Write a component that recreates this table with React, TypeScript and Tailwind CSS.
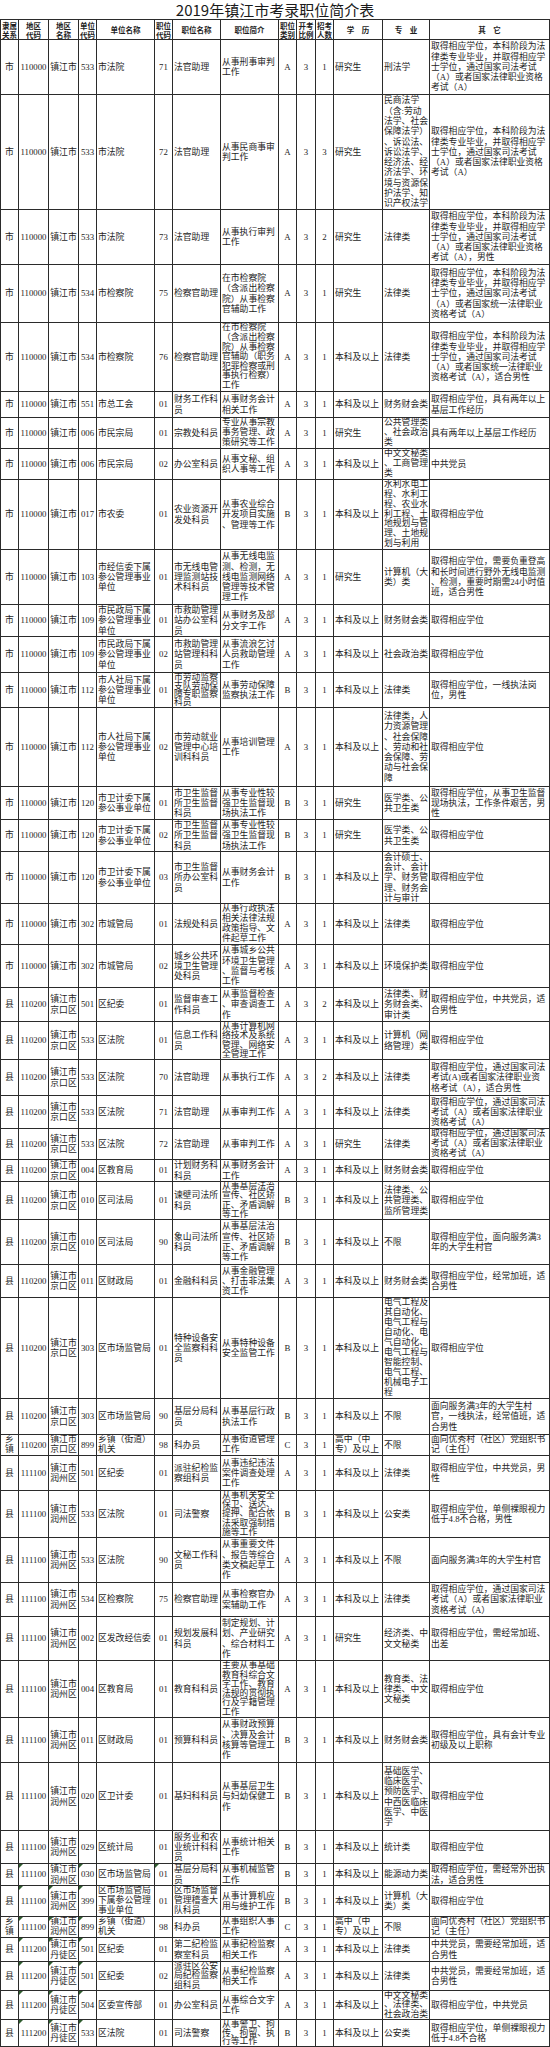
const GRID =
  "grid grid-cols-[18px_30px_30px_18px_58px_18px_48px_58px_18px_19px_18px_49px_47px_120px] border-l border-[#2b2b2b]";

const CELL =
  "relative flex items-center overflow-hidden whitespace-pre border-r border-b border-[#2b2b2b] px-px";

const COLW = [18, 30, 30, 18, 58, 18, 48, 58, 18, 19, 18, 49, 47, 120];
const FONT = 8.8;
const LEAD = 10.3;

const ALIGN = [
  "justify-center text-center",
  "justify-center text-center",
  "justify-center text-center",
  "justify-center text-center",
  "justify-start text-left",
  "justify-center text-center",
  "justify-start text-left",
  "justify-start text-left",
  "justify-center text-center",
  "justify-center text-center",
  "justify-center text-center",
  "justify-start text-left",
  "justify-start text-left",
  "justify-start text-left",
];

const HEAD = [
  "隶属\n关系",
  "地区\n代码",
  "地区\n名称",
  "单位\n代码",
  "单位名称",
  "职位\n代码",
  "职位名称",
  "职位简介",
  "职位\n类别",
  "开考\n比例",
  "招考\n人数",
  "学　历",
  "专　业",
  "其　它",
];

const S = "市";
const X = "110000";
const Z = "镇江市";
const JK = "镇江市\n京口区";
const RZ = "镇江市\n润州区";
const DT = "镇江市\n丹徒区";
const XW = "取得相应学位";
const FA = "取得相应学位，本科阶段为法\n律类专业毕业，并取得相应学\n士学位，通过国家司法考试\n";
const KS = "取得相应学位，通过国家司法\n考试（A）或者国家法律职业\n资格考试（A）";

// row heights in px, read off the screenshot
const HEIGHTS = [
  55, 115, 55, 58, 69, 26, 31, 31, 70, 55, 32, 36, 35, 79, 33, 32, 52, 41, 43, 34, 38, 36, 33, 31, 22, 38, 45,
  33, 101, 36, 21, 35, 47, 45, 34, 44, 57, 45, 68, 33, 22, 31, 21, 24, 29, 29, 27,
];

const ROWS: string[][] = [
  [S, X, Z, "533", "市法院", "71", "法官助理", "从事刑事审判\n工作", "A", "3", "1", "研究生", "刑法学", FA + "（A）或者国家法律职业资格\n考试（A）"],
  [S, X, Z, "533", "市法院", "72", "法官助理", "从事民商事审\n判工作", "A", "3", "3", "研究生", "民商法学\n（含:劳动\n法学、社会\n保障法学）\n、诉讼法、\n诉讼法学、\n经济法、经\n济法学、环\n境与资源保\n护法学、知\n识产权法学", FA + "（A）或者国家法律职业资格\n考试（A）"],
  [S, X, Z, "533", "市法院", "73", "法官助理", "从事执行审判\n工作", "A", "3", "2", "研究生", "法律类", FA + "（A）或者国家法律职业资格\n考试（A），男性"],
  [S, X, Z, "534", "市检察院", "75", "检察官助理", "在市检察院\n（含派出检察\n院）从事检察\n官辅助工作", "A", "3", "1", "研究生", "法律类", FA + "（A）或者国家统一法律职业\n资格考试（A）"],
  [S, X, Z, "534", "市检察院", "76", "检察官助理", "在市检察院\n（含派出检察\n院）从事检察\n官辅助（职务\n犯罪检察或刑\n事执行检察）\n工作", "A", "3", "1", "本科及以上", "法律类", FA + "（A）或者国家统一法律职业\n资格考试（A），适合男性"],
  [S, X, Z, "551", "市总工会", "01", "财务工作科\n员", "从事财务会计\n相关工作", "A", "3", "1", "本科及以上", "财务财会类", "取得相应学位，具有两年以上\n基层工作经历"],
  [S, X, Z, "006", "市民宗局", "01", "宗教处科员", "专业从事宗教\n事务管理、政\n策研究等工作", "A", "3", "1", "研究生", "公共管理类\n、社会政治\n类", "具有两年以上基层工作经历"],
  [S, X, Z, "006", "市民宗局", "02", "办公室科员", "从事文秘、组\n织人事等工作", "A", "3", "1", "本科及以上", "中文文秘类\n、工商管理\n类", "中共党员"],
  [S, X, Z, "017", "市农委", "01", "农业资源开\n发处科员", "从事农业综合\n开发项目实施\n、管理等工作", "B", "3", "1", "本科及以上", "水利水电工\n程、水利工\n程、农业水\n利工程、土\n地规划与管\n理、土地规\n划与利用", XW],
  [S, X, Z, "103", "市经信委下属\n参公管理事业\n单位", "01", "市无线电管\n理监测站技\n术科科员", "从事无线电监\n测、检测，无\n线电监测网络\n管理等技术管\n理工作", "A", "3", "1", "研究生", "计算机（大\n类）类", "取得相应学位，需要负重登高\n和长时间进行野外无线电监测\n、检测，重要时期需24小时值\n班，适合男性"],
  [S, X, Z, "109", "市民政局下属\n参公管理事业\n单位", "01", "市救助管理\n站办公室科\n员", "从事财务及部\n分文字工作", "A", "3", "1", "本科及以上", "财务财会类", XW],
  [S, X, Z, "109", "市民政局下属\n参公管理事业\n单位", "02", "市救助管理\n站管理科科\n员", "从事流浪乞讨\n人员救助管理\n工作", "A", "3", "1", "本科及以上", "社会政治类", XW],
  [S, X, Z, "112", "市人社局下属\n参公管理事业\n单位", "01", "市劳动监察\n支队劳动保\n障专职监察\n科员", "从事劳动保障\n监察执法工作", "B", "3", "1", "本科及以上", "法律类", "取得相应学位，一线执法岗\n位，男性"],
  [S, X, Z, "112", "市人社局下属\n参公管理事业\n单位", "02", "市劳动就业\n管理中心培\n训科科员", "从事培训管理\n工作", "A", "3", "1", "本科及以上", "法律类，人\n力资源管理\n、社会保障\n、劳动和社\n会保障、劳\n动与社会保\n障", XW],
  [S, X, Z, "120", "市卫计委下属\n参公事业单位", "01", "市卫生监督\n所卫生监督\n科员", "从事专业性较\n强卫生监督现\n场执法工作", "B", "3", "1", "研究生", "医学类、公\n共卫生类", "取得相应学位，从事卫生监督\n现场执法，工作条件艰苦，男\n性"],
  [S, X, Z, "120", "市卫计委下属\n参公事业单位", "02", "市卫生监督\n所卫生监督\n科员", "从事专业性较\n强卫生监督现\n场执法工作", "B", "3", "1", "研究生", "医学类、公\n共卫生类", XW],
  [S, X, Z, "120", "市卫计委下属\n参公事业单位", "03", "市卫生监督\n所办公室科\n员", "从事财务会计\n工作", "B", "3", "1", "本科及以上", "会计硕士、\n会计、会计\n学、财务管\n理、财务会\n计与审计", XW],
  [S, X, Z, "302", "市城管局", "01", "法规处科员", "从事行政执法\n相关法律法规\n政策指导、文\n件起草工作", "A", "3", "1", "本科及以上", "法律类", XW],
  [S, X, Z, "302", "市城管局", "02", "城乡公共环\n境卫生管理\n处科员", "从事城乡公共\n环境卫生管理\n、监督与考核\n工作", "A", "3", "1", "本科及以上", "环境保护类", XW],
  ["县", "110200", JK, "501", "区纪委", "01", "监督审查工\n作科员", "从事监督检查\n、审查调查工\n作", "A", "3", "2", "本科及以上", "法律类、财\n务财会类、\n审计类", "取得相应学位，中共党员，适\n合男性"],
  ["县", "110200", JK, "533", "区法院", "01", "信息工作科\n员", "从事计算机网\n络技术及系统\n管理、网络安\n全管理工作", "A", "3", "1", "本科及以上", "计算机（网\n络管理）类", XW],
  ["县", "110200", JK, "533", "区法院", "70", "法官助理", "从事执行工作", "A", "3", "2", "本科及以上", "法律类", "取得相应学位，通过国家司法\n考试(A)或者国家法律职业资\n格考试（A），适合男性"],
  ["县", "110200", JK, "533", "区法院", "71", "法官助理", "从事审判工作", "A", "3", "1", "本科及以上", "法律类", KS],
  ["县", "110200", JK, "533", "区法院", "72", "法官助理", "从事审判工作", "A", "3", "1", "研究生", "法律类", KS],
  ["县", "110200", JK, "004", "区教育局", "01", "计划财务科\n科员", "从事财务会计\n工作", "A", "3", "1", "本科及以上", "财务财会类", XW],
  ["县", "110200", JK, "010", "区司法局", "01", "谏壁司法所\n科员", "从事基层法治\n宣传、社区矫\n正、矛盾调解\n等工作", "B", "3", "1", "本科及以上", "法律类、公\n共管理类、\n监所管理类", XW],
  ["县", "110200", JK, "010", "区司法局", "90", "象山司法所\n科员", "从事基层法治\n宣传、社区矫\n正、矛盾调解\n等工作", "B", "3", "1", "本科及以上", "不限", "取得相应学位，面向服务满3\n年的大学生村官"],
  ["县", "110200", JK, "011", "区财政局", "01", "金融科科员", "从事金融管理\n、打击非法集\n资工作", "A", "3", "1", "本科及以上", "财务财会类", "取得相应学位，经常加班，适\n合男性"],
  ["县", "110200", JK, "303", "区市场监管局", "01", "特种设备安\n全监察科科\n员", "从事特种设备\n安全监管工作", "B", "3", "1", "本科及以上", "电气工程及\n其自动化、\n电气工程与\n自动化、电\n气自动化、\n电气工程与\n智能控制、\n电气工程、\n机械电子工\n程", XW],
  ["县", "110200", JK, "303", "区市场监管局", "90", "基层分局科\n员", "从事基层行政\n执法工作", "B", "3", "1", "本科及以上", "不限", "面向服务满3年的大学生村\n官，一线执法，经常值班，适\n合男性"],
  ["乡\n镇", "110200", JK, "899", "乡镇（街道）\n机关", "98", "科办员", "从事街道管理\n工作", "C", "3", "1", "高中（中\n专）及以上", "不限", "面向优秀村（社区）党组织书\n记（主任）"],
  ["县", "111100", RZ, "501", "区纪委", "01", "派驻纪检监\n察组科员", "从事违纪违法\n案件调查处理\n工作", "A", "3", "1", "本科及以上", "法律类", "取得相应学位，中共党员，男\n性"],
  ["县", "111100", RZ, "533", "区法院", "01", "司法警察", "从事机关安全\n保卫、送达、\n提押、配合依\n法采取强制措\n施等工作", "B", "3", "1", "本科及以上", "公安类", "取得相应学位，单侧裸眼视力\n低于4.8不合格，男性"],
  ["县", "111100", RZ, "533", "区法院", "90", "文秘工作科\n员", "从事重要文件\n、报告等综合\n类文稿起草工\n作", "A", "3", "1", "本科及以上", "不限", "面向服务满3年的大学生村官"],
  ["县", "111100", RZ, "534", "区检察院", "75", "检察官助理", "从事检察官办\n案辅助工作", "A", "3", "1", "本科及以上", "法律类", KS],
  ["县", "111100", RZ, "002", "区发改经信委", "01", "规划发展科\n科员", "制定规划、计\n划、产业研究\n、综合材料工\n作", "A", "3", "1", "研究生", "经济类、中\n文文秘类", "取得相应学位，需经常加班、\n出差"],
  ["县", "111100", RZ, "004", "区教育局", "01", "教育科科员", "主要从事基础\n教育科综合文\n字工作、教育\n法规的贯彻执\n行及学籍管理\n工作", "A", "3", "1", "本科及以上", "教育类、法\n律类、中文\n文秘类", XW],
  ["县", "111100", RZ, "011", "区财政局", "01", "预算科科员", "从事财政预算\n、决算及会计\n核算等管理工\n作", "B", "3", "1", "本科及以上", "财务财会类", "取得相应学位，具有会计专业\n初级及以上职称"],
  ["县", "111100", RZ, "020", "区卫计委", "01", "基妇科科员", "从事基层卫生\n与妇幼保健工\n作", "B", "3", "1", "本科及以上", "基础医学、\n临床医学、\n预防医学、\n中西医临床\n医学、中医\n学", XW],
  ["县", "111100", RZ, "029", "区统计局", "01", "服务业和农\n业统计科科\n员", "从事统计相关\n工作", "B", "3", "1", "本科及以上", "统计类", XW],
  ["县", "111100", RZ, "030", "区市场监管局", "01", "基层分局科\n员", "从事机械监管\n工作", "B", "3", "1", "本科及以上", "能源动力类", "取得相应学位，需经常外出执\n法，适合男性"],
  ["县", "111100", RZ, "399", "区市场监管局\n下属参公管理\n事业单位", "01", "区市场监督\n管理稽查大\n队科员", "从事计算机应\n用与维护工作", "B", "3", "1", "本科及以上", "计算机（大\n类）类", XW],
  ["乡\n镇", "111100", RZ, "899", "乡镇（街道）\n机关", "98", "科办员", "从事组织人事\n工作", "C", "3", "1", "高中（中\n专）及以上", "不限", "面向优秀村（社区）党组织书\n记（主任）"],
  ["县", "111200", DT, "501", "区纪委", "01", "第二纪检监\n察室科员", "从事纪检监察\n相关工作", "A", "3", "1", "本科及以上", "法律类", "中共党员，需要经常加班，适\n合男性"],
  ["县", "111200", DT, "501", "区纪委", "02", "派驻区公安\n局纪检监察\n组科员", "从事纪检监察\n相关工作", "A", "3", "1", "本科及以上", "法律类", "中共党员，需要经常加班，适\n合男性"],
  ["县", "111200", DT, "504", "区委宣传部", "01", "办公室科员", "从事综合文字\n工作", "A", "3", "1", "本科及以上", "中文文秘类\n、法律类、\n社会政治类", "取得相应学位，中共党员"],
  ["县", "111200", DT, "533", "区法院", "01", "司法警察", "从事警卫、拘\n传、拘留、执\n行等工作", "B", "3", "1", "本科及以上", "公安类", "取得相应学位，单侧裸眼视力\n低于4.8不合格"],
];

// little excel "number stored as text" corner marks
function hasMark(row: number, col: number) {
  if (row < 40) return false;
  if (col === 1 || col === 3) return true;
  if (col === 5 && row === 40) return true;
  if (col === 2 && row >= 41) return true;
  return false;
}

// width of a line in em (ascii is half width)
function emWidth(line: string) {
  let w = 0;
  for (const ch of line) w += ch.charCodeAt(0) < 128 ? 0.5 : 1;
  return w;
}

// squeeze a cell a little when the text is taller / wider than the cell
function fit(text: string, col: number, height: number) {
  const lines = text.split("\n");
  const style: { lineHeight?: string; letterSpacing?: string } = {};
  const lh = (height - 1.5) / lines.length;
  if (lh < LEAD) style.lineHeight = `${lh}px`;
  const widest = lines.reduce((a, l) => (emWidth(l) > emWidth(a) ? l : a), "");
  const room = COLW[col] - 3;
  const need = emWidth(widest) * FONT;
  if (need > room) style.letterSpacing = `${(room - need) / [...widest].length}px`;
  return style;
}

export default function App() {
  return (
    <div className="w-[550px] h-[2047px] overflow-hidden bg-white text-[#1e1e1e] font-['Liberation_Serif','Noto_Sans_CJK_SC',serif]">
      {/* Title */}
      <div className="h-[19px] flex items-center justify-center text-[15px] leading-[19px] font-['Noto_Sans_CJK_SC',sans-serif] text-[#1a1a1a]">
        2019年镇江市考录职位简介表
      </div>

      {/* Header */}
      <div className={`${GRID} h-[21px] border-t`}>
        {HEAD.map((h, i) => (
          <div
            key={i}
            className={`${CELL} justify-center text-center text-[7.5px] leading-[9px] font-bold font-['Noto_Sans_CJK_SC',sans-serif]`}
          >
            {h}
          </div>
        ))}
      </div>

      {/* Body */}
      {ROWS.map((row, r) => (
        <div key={r} className={GRID} style={{ height: HEIGHTS[r] }}>
          {row.map((v, c) => (
            <div
              key={c}
              className={`${CELL} ${ALIGN[c]} text-[8.8px] leading-[10.3px]`}
              style={fit(v, c, HEIGHTS[r])}
            >
              {hasMark(r, c) && (
                <span className="absolute left-0 top-0 h-0 w-0 border-t-[4px] border-r-[4px] border-t-[#2f5d2f] border-r-transparent" />
              )}
              {v}
            </div>
          ))}
        </div>
      ))}
    </div>
  );
}
